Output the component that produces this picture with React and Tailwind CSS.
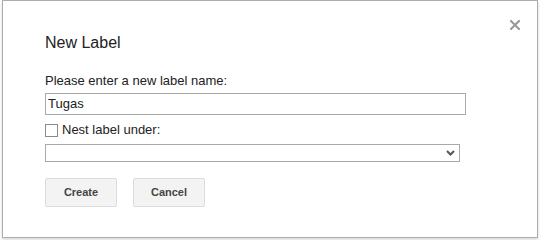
export default function App() {
  return (
    <div className="w-[540px] h-[240px] bg-white overflow-hidden" style={{ fontFamily: '"Liberation Sans", Arial, sans-serif' }}>
      <div className="relative ml-[2px] w-[536px] h-[238px] border border-[#acacac] bg-white shadow-[0_2px_3px_rgba(0,0,0,0.15)] pl-[42px] pt-[32px]">
        <button className="absolute top-[19px] right-[17px] w-[10px] h-[10px]">
          <svg width="10" height="10" viewBox="0 0 10 10">
            <path d="M1 1 L9 9 M9 1 L1 9" stroke="#9a9a9a" strokeWidth="2.2" strokeLinecap="square" />
          </svg>
        </button>

        <h2 className="text-[16px] leading-[20px] text-[#222]">New Label</h2>

        <div className="mt-[20px] text-[13px] leading-[16px] text-[#222]">Please enter a new label name:</div>
        <div className="mt-[4px] w-[421px] h-[22px] border border-[#a9a9a9] px-[2px] text-[13px] leading-[20px] text-[#222]">
          Tugas
        </div>

        <div className="mt-[7px] flex items-start gap-[4px] h-[16px]">
          <div className="mt-[2px] w-[13px] h-[13px] border border-[#8a8a8a] bg-white" />
          <span className="text-[13px] leading-[16px] text-[#222]">Nest label under:</span>
        </div>

        <div className="mt-[6px] w-[415px] h-[18px] border border-[#a9a9a9] flex items-center justify-end pr-[4px]">
          <svg width="9" height="6" viewBox="0 0 9 6">
            <path d="M1 1 L4.5 4.5 L8 1" fill="none" stroke="#555" strokeWidth="2" />
          </svg>
        </div>

        <div className="mt-[16px] flex gap-[16px]">
          <button className="w-[72px] h-[29px] rounded-[2px] border border-[#dcdcdc] bg-[#f3f3f3] text-[11px] font-bold text-[#444]">
            Create
          </button>
          <button className="w-[72px] h-[29px] rounded-[2px] border border-[#dcdcdc] bg-[#f3f3f3] text-[11px] font-bold text-[#444]">
            Cancel
          </button>
        </div>
      </div>
    </div>
  );
}
